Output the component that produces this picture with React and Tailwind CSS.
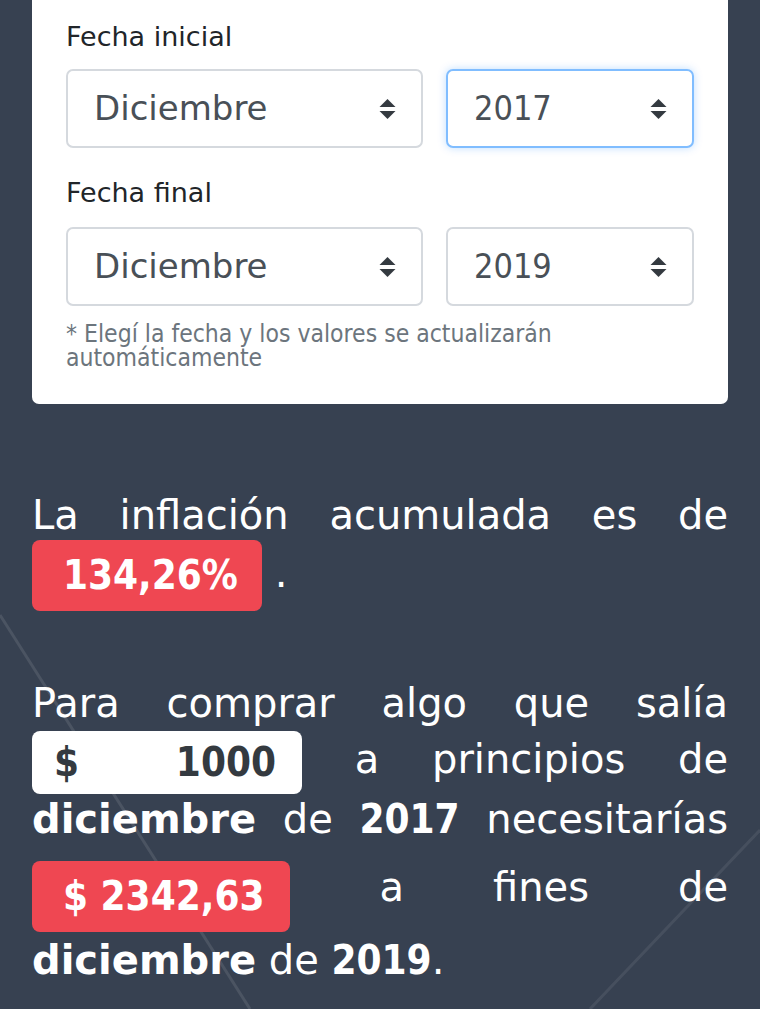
import React from "react";

const FONT = { fontFamily: '"DejaVu Sans", "Noto Sans", sans-serif' };
const COND = { fontFamily: '"DejaVu Sans Condensed", "DejaVu Sans", sans-serif' };

function Arrows() {
  return (
    <svg width="17" height="22" viewBox="0 0 17 22" className="shrink-0">
      <path d="M8.5 1 L16.5 9 L0.5 9 Z" fill="#343a40" />
      <path d="M0.5 13 L16.5 13 L8.5 21 Z" fill="#343a40" />
    </svg>
  );
}

function Select({ value, focused, digits, className }) {
  return (
    <div
      className={
        "h-[79px] rounded-[7px] bg-white flex items-center justify-between pl-[26px] pr-[25px] text-[34px] text-[#495057] " +
        (focused
          ? "border-2 border-[#80bdff] shadow-[0_0_8px_rgba(0,123,255,0.25)] "
          : "border-2 border-[#d5d9de] ") +
        className
      }
    >
      <span style={digits ? COND : undefined}>{value}</span>
      <Arrows />
    </div>
  );
}

export default function App() {
  return (
    <div className="relative min-h-screen overflow-hidden bg-[#374151]" style={FONT}>
      {/* faint background strokes */}
      <svg className="absolute inset-0 w-full h-full pointer-events-none" viewBox="0 0 760 1009" preserveAspectRatio="none">
        <line x1="0" y1="615" x2="250" y2="1009" stroke="#ffffff" strokeOpacity="0.1" strokeWidth="3" />
        <line x1="760" y1="830" x2="590" y2="1009" stroke="#ffffff" strokeOpacity="0.08" strokeWidth="3" />
      </svg>

      <div className="relative px-8">
        <div className="bg-white rounded-b-[7px] px-[34px] pt-[19px] pb-[34px]">
          <div className="text-[27px] leading-[36px] text-[#212529]">Fecha inicial</div>
          <div className="flex gap-[23px] mt-[14px]">
            <Select value="Diciembre" className="w-[357px]" />
            <Select value="2017" digits focused className="flex-1" />
          </div>

          <div className="text-[27px] leading-[36px] text-[#212529] mt-[27px]">Fecha final</div>
          <div className="flex gap-[23px] mt-[16px]">
            <Select value="Diciembre" className="w-[357px]" />
            <Select value="2019" digits className="flex-1" />
          </div>

          <p className="mt-[16px] text-[24.5px] leading-[24px] text-[#6c757d]" style={COND}>
            * Elegí la fecha y los valores se actualizarán automáticamente
          </p>
        </div>

        <p className="mt-[83px] text-white text-[40px] leading-[56px] text-justify">
          La inflación acumulada es de{" "}
          <span
            className="inline-block align-middle my-[-3px] h-[71px] leading-[71px] pl-[31px] pr-[24px] rounded-[8px] bg-[#ef4752] font-bold"
            style={COND}
          >
            134,26%
          </span>{" "}
          .
        </p>

        <p className="mt-[67px] text-white text-[40px] leading-[56px] text-justify">
          Para comprar algo que salía{" "}
          <span
            className="inline-flex align-middle my-[-3px] w-[270px] h-[63px] items-center justify-between pl-[22px] pr-[26px] rounded-[8px] bg-white text-[#343a40] font-bold"
            style={COND}
          >
            <span>$</span>
            <span>1000</span>
          </span>{" "}
          a principios de <b>diciembre</b> de <b style={COND}>2017</b> necesitarías{" "}
          <span
            className="inline-block align-middle mt-[14px] h-[71px] leading-[71px] pl-[31px] pr-[26px] rounded-[8px] bg-[#ef4752] font-bold"
            style={COND}
          >
            $ 2342,63
          </span>{" "}
          a fines de <b>diciembre</b> de <b style={COND}>2019</b>.
        </p>
      </div>
    </div>
  );
}
